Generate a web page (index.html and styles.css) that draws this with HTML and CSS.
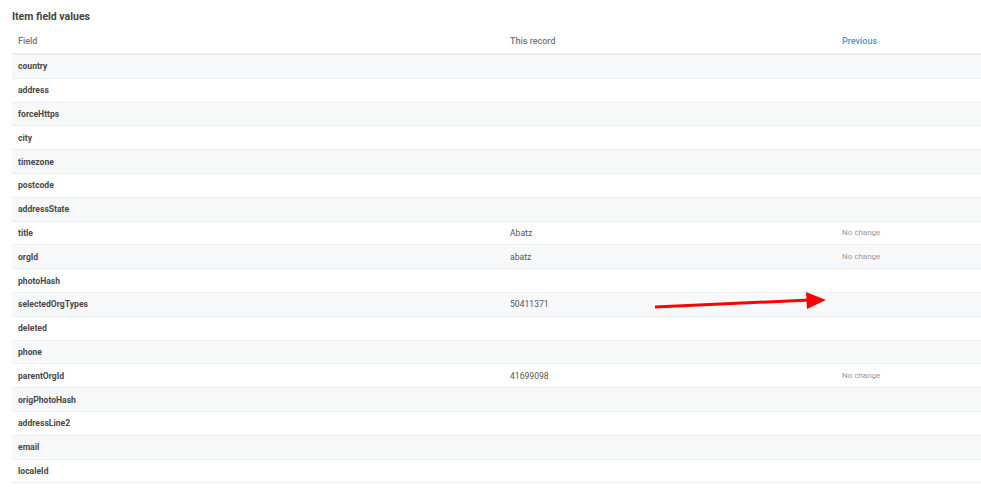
FILE: index.html
```html
<!DOCTYPE html>
<html>
<head>
<meta charset="utf-8">
<link rel="stylesheet" href="styles.css">
</head>
<body>
<div class="page">
  <h2 class="title">Item field values</h2>
  <table class="fields">
    <colgroup><col class="c1"><col class="c2"><col class="c3"></colgroup>
    <thead>
      <tr><th>Field</th><th>This record</th><th class="prev">Previous</th></tr>
    </thead>
    <tbody>
      <tr><td class="name">country</td><td></td><td></td></tr>
      <tr><td class="name">address</td><td></td><td></td></tr>
      <tr><td class="name">forceHttps</td><td></td><td></td></tr>
      <tr><td class="name">city</td><td></td><td></td></tr>
      <tr><td class="name">timezone</td><td></td><td></td></tr>
      <tr><td class="name">postcode</td><td></td><td></td></tr>
      <tr><td class="name">addressState</td><td></td><td></td></tr>
      <tr><td class="name">title</td><td class="val">Abatz</td><td class="nc">No change</td></tr>
      <tr><td class="name">orgId</td><td class="val">abatz</td><td class="nc">No change</td></tr>
      <tr><td class="name">photoHash</td><td></td><td></td></tr>
      <tr><td class="name">selectedOrgTypes</td><td class="val">50411371</td><td></td></tr>
      <tr><td class="name">deleted</td><td></td><td></td></tr>
      <tr><td class="name">phone</td><td></td><td></td></tr>
      <tr><td class="name">parentOrgId</td><td class="val">41699098</td><td class="nc">No change</td></tr>
      <tr><td class="name">origPhotoHash</td><td></td><td></td></tr>
      <tr><td class="name">addressLine2</td><td></td><td></td></tr>
      <tr><td class="name">email</td><td></td><td></td></tr>
      <tr><td class="name">localeId</td><td></td><td></td></tr>
    </tbody>
  </table>
  <svg class="arrow" width="200" height="40" viewBox="0 0 200 40">
    <line x1="15" y1="27" x2="170" y2="20" stroke="#ff0000" stroke-width="3"/>
    <polygon points="166,12 186,20 167,29" fill="#ff0000"/>
  </svg>
</div>
</body>
</html>
```
FILE: styles.css
```css
html, body { margin: 0; padding: 0; background: #fff; }
.page {
  position: relative;
  padding: 10px 0 0 12px;
  font-family: Roboto, "Liberation Sans", sans-serif;
}
.title {
  margin: 0 0 7px 0;
  font-size: 10.5px;
  font-weight: 700;
  color: #444;
  line-height: 14px;
}
.fields {
  width: 969px;
  border-collapse: collapse;
  table-layout: fixed;
}
.c1 { width: 492px; }
.c2 { width: 332px; }
.c3 { width: 145px; }
.fields th {
  text-align: left;
  font-size: 9px;
  font-weight: 500;
  color: #777;
  height: 20px;
  padding: 0 6px 2px;
  border-bottom: 2px solid #e8ebf1;
}
.fields th.prev { color: #3d9ad6; }
.fields td {
  height: 22.8px;
  padding: 0 6px;
  border-bottom: 1px solid #eceef2;
  font-size: 8.6px;
  color: #555;
}
.fields tbody tr:nth-child(odd) td { background: #f7f8fa; }
.fields td.name { font-weight: 700; color: #4a4a4a; }
.fields td.val { color: #555; }
.fields td.nc { font-size: 8px; color: #999; }
.arrow {
  position: absolute;
  left: 640px;
  top: 280px;
}
```
